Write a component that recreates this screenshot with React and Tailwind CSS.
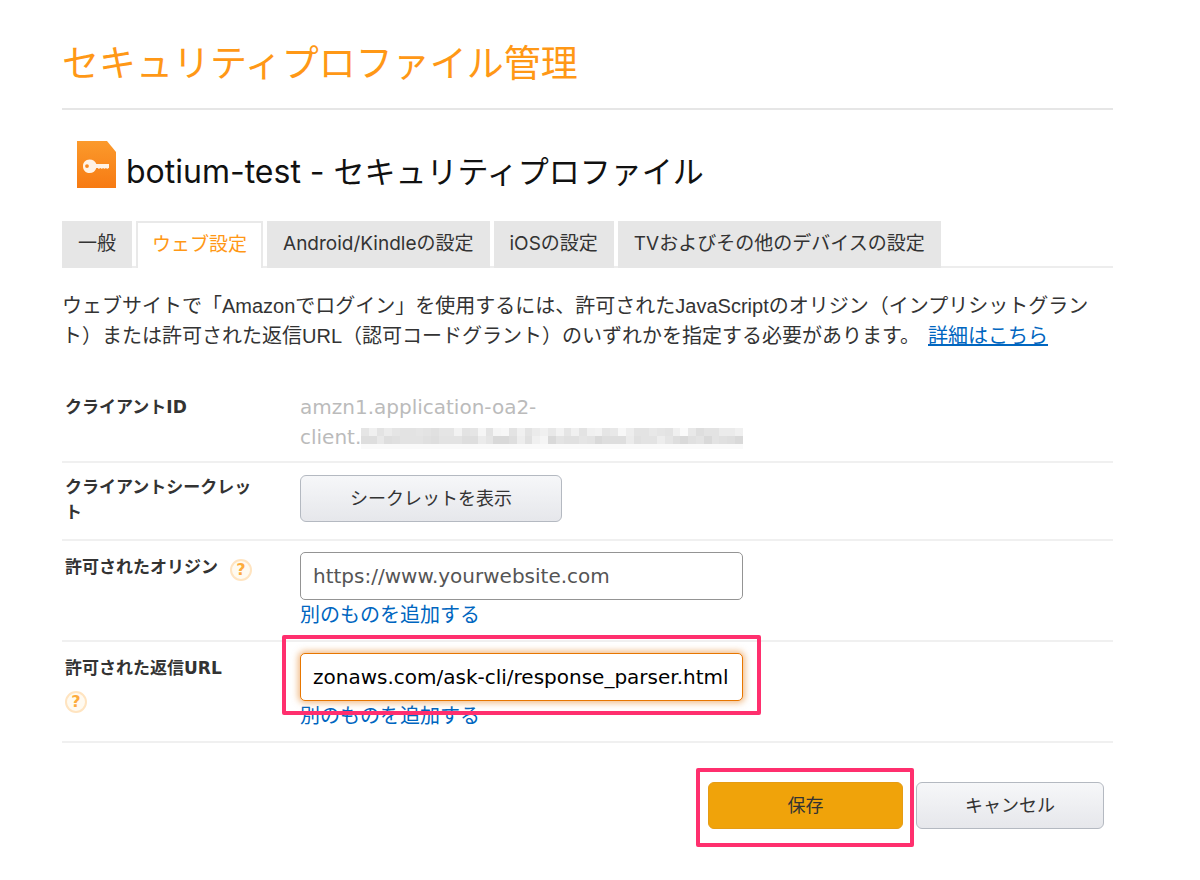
import { clsx } from 'clsx';

const tabs = ['一般', 'ウェブ設定', 'Android/Kindleの設定', 'iOSの設定', 'TVおよびその他のデバイスの設定'];

// Opacity of each masked cell, in percent (top row, bottom row)
const maskTop = [10, 6, 11, 8, 10, 11, 11, 10, 11, 12, 10, 10, 5, 11, 10, 4, 11, 4, 3, 11, 6, 11, 8, 6, 9, 5, 10, 6, 11, 6, 5, 10, 9, 3, 7, 11, 11, 9, 10, 11, 6, 2, 9, 13, 11, 11, 8, 8, 6];
const maskBottom = [13, 13, 9, 13, 12, 11, 11, 11, 12, 13, 11, 11, 11, 13, 13, 8, 10, 15, 15, 13, 7, 12, 6, 4, 15, 11, 12, 12, 10, 11, 15, 13, 13, 13, 8, 12, 11, 11, 7, 10, 13, 15, 12, 11, 15, 11, 12, 13, 15];

const MaskedValue = () => (
  <svg className="h-6 w-[382px] min-w-0" viewBox="0 0 392 24" preserveAspectRatio="none" shapeRendering="crispEdges" aria-hidden="true">
    {maskTop.map((o, i) => (
      <rect key={`t${i}`} x={i * 8} y="3" width="8" height="8" fill="#000" opacity={o / 100} />
    ))}
    {maskBottom.map((o, i) => (
      <rect key={`b${i}`} x={i * 8} y="11" width="8" height="8" fill="#000" opacity={o / 100} />
    ))}
    <rect x="0" y="19" width="392" height="5" fill="#000" opacity="0.02" />
  </svg>
);

const ProfileIcon = () => (
  <svg className="h-[47px] w-[39px] shrink-0" viewBox="0 0 39 47" aria-hidden="true">
    <defs>
      <linearGradient id="profile" x1="0" y1="0" x2="0" y2="1">
        <stop offset="0" stopColor="#fb9a2c" />
        <stop offset="1" stopColor="#f77a12" />
      </linearGradient>
    </defs>
    <path d="M0 0H30L39 11V47H0Z" fill="url(#profile)" />
    <path
      fillRule="evenodd"
      fill="#fff3e6"
      d="M12.500 18.500C16 18.500 18.500 20.500 19.300 23H32V27H19.300C18.500 30 16 32 12.500 32C8.500 32 6 29 6 25.200C6 21.500 8.500 18.500 12.500 18.500ZM10 23.200A1.900 1.900 0 1 0 10 27A1.900 1.900 0 1 0 10 23.200Z"
    />
    <path d="M21 27.300H32" stroke="#fff3e6" strokeWidth="1.200" strokeDasharray="1.800 1" opacity="0.7" />
  </svg>
);

const HelpButton = ({ label }) => (
  <button
    type="button"
    aria-label={label}
    className="flex size-[22px] shrink-0 items-center justify-center rounded-full border-2 border-[#ffe4c0] bg-[#fffaf0] font-['DejaVu_Sans',sans-serif] text-base leading-4 font-bold text-[#fdab3c]"
  >
    ?
  </button>
);

const Row = ({ label, children, labelClass, className }) => (
  <div className={clsx('flex border-b-2 border-[#f0f0f0]', className)}>
    <div className={clsx('w-[238px] shrink-0 pr-8 pl-[3px] text-[17px] leading-[25px] font-bold', labelClass)}>
      {label}
    </div>
    <div className="w-[443px] min-w-0">{children}</div>
  </div>
);

const AddAnother = () => (
  <a href="#add" className="block text-xl leading-[30px] text-[#0066c0]">
    別のものを追加する
  </a>
);

const inputStyle = 'block h-12 w-full rounded-[5px] border bg-white px-3 text-xl outline-none';
const buttonStyle = 'h-[47px] rounded-[6px] border text-[18px]';
const greyButton = 'border-[#b4b9c1] bg-linear-to-b from-[#f6f7f9] to-[#e6e7eb]';

const App = () => {
  return (
    <main className="bg-white pt-[34px] pr-[87px] pb-8 pl-[62px] font-['DejaVu_Sans','Noto_Sans_CJK_JP',sans-serif] text-[#333333]">
      <h1 className="border-b-2 border-[#e6e6e6] pb-5 font-['Noto_Sans_CJK_JP',sans-serif] text-[37px] leading-[54px] text-[#ff9816]">
        セキュリティプロファイル管理
      </h1>

      <div className="mt-[31px] flex items-start gap-[10px] pl-[15px]">
        <ProfileIcon />
        <h2 className="pt-2 font-['Inter','Noto_Sans_CJK_JP',sans-serif] text-[31px] leading-[46px] text-[#111111]">
          <span className="text-[32px]">botium-test - </span>
          セキュリティプロファイル
        </h2>
      </div>

      <nav className="mt-[26px] flex gap-1 border-b-2 border-[#ededed] font-['Inter','Noto_Sans_CJK_JP',sans-serif] text-[19px]">
        {tabs.map((tab, i) => (
          <a
            key={tab}
            href="#tab"
            className={clsx(
              '-mb-[2px] flex h-[47px] items-center whitespace-nowrap',
              i === 1 ? 'border-x-2 border-t-2 border-[#e9e9e9] bg-white px-[14px] text-[#ff9816]' : 'bg-[#e6e6e6] px-4'
            )}
          >
            {tab}
          </a>
        ))}
      </nav>

      <p className="mt-[23px] font-['Liberation_Sans','Noto_Sans_CJK_JP',sans-serif] text-xl leading-[30px]">
        ウェブサイトで「Amazonでログイン」を使用するには、許可されたJavaScriptのオリジン（インプリシットグラント）または許可された返信URL（認可コードグラント）のいずれかを指定する必要があります。
        <a href="#details" className="ml-2 text-[#0066c0] underline">詳細はこちら</a>
      </p>

      <form className="mt-8" onSubmit={(e) => e.preventDefault()}>
        <Row label="クライアントID" labelClass="pt-[3px]" className="pt-[9px] pb-[9px]">
          <div className="text-xl leading-[30px] text-[#bbbbbb]">
            <div>amzn1.application-oa2-</div>
            <div className="flex items-center">client.<MaskedValue /></div>
          </div>
        </Row>

        <Row label="クライアントシークレット" className="pt-3 pb-[14px]">
          <button type="button" className={clsx(buttonStyle, greyButton, 'w-[262px]')}>
            シークレットを表示
          </button>
        </Row>

        <Row
          label={
            <div className="flex gap-3">
              <label htmlFor="origin">許可されたオリジン</label>
              <div className="pt-1">
                <HelpButton label="許可されたオリジンのヘルプ" />
              </div>
            </div>
          }
          labelClass="pt-[3px]"
          className="pt-[11px] pb-[10px]"
        >
          <input
            id="origin"
            type="text"
            placeholder="https://www.yourwebsite.com"
            className={clsx(inputStyle, 'border-[#949494] placeholder:text-[#555555]')}
          />
          <AddAnother />
        </Row>

        <Row
          label={
            <div className="flex flex-col gap-[10px]">
              <label htmlFor="return-url">許可された返信URL</label>
              <HelpButton label="許可された返信URLのヘルプ" />
            </div>
          }
          labelClass="pt-[3px]"
          className="pt-[11px] pb-[10px]"
        >
          <div className="relative">
            <input
              id="return-url"
              type="text"
              defaultValue="zonaws.com/ask-cli/response_parser.html"
              className={clsx(inputStyle, 'border-[#e77600] text-black shadow-[0_0_6px_2px_rgba(228,121,17,0.5)]')}
            />
            <div className="pointer-events-none absolute -inset-x-[18px] -top-[18px] -bottom-[14px] rounded-[2px] border-4 border-[#ff2f6e]" />
          </div>
          <AddAnother />
        </Row>

        <div className="mt-[25px] flex items-start justify-end gap-[2px] pr-[9px]">
          <div className="rounded-[2px] border-4 border-[#ff2f6e] pt-[10px] pr-[7px] pb-[14px] pl-2">
            <button type="submit" className={clsx(buttonStyle, 'w-[195px] border-[#e69c14] bg-[#f0a30a]')}>
              保存
            </button>
          </div>
          <button type="button" className={clsx(buttonStyle, greyButton, 'mt-[14px] w-[188px]')}>
            キャンセル
          </button>
        </div>
      </form>
    </main>
  );
};

export default App;
